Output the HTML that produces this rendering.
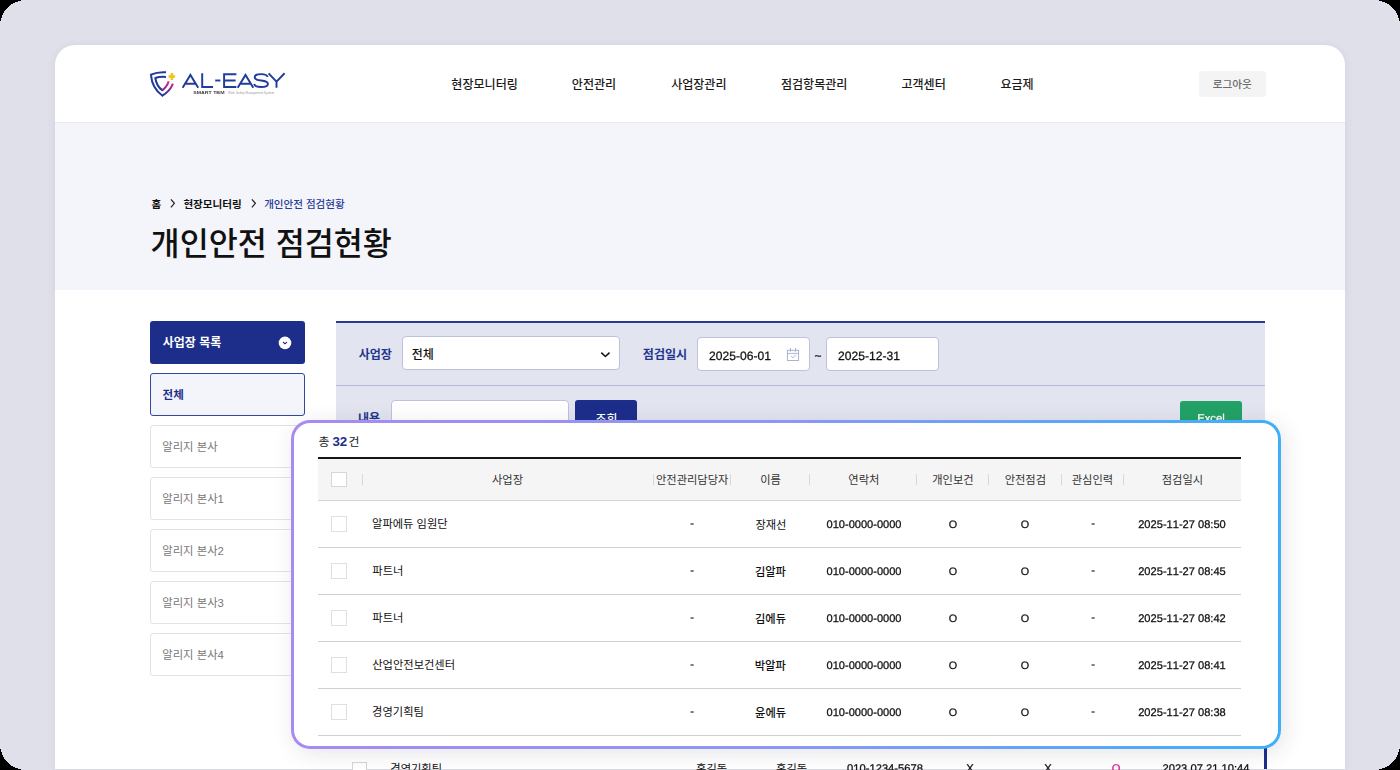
<!DOCTYPE html>
<html lang="ko"><head><meta charset="utf-8"><title>개인안전 점검현황</title>
<style>
html,body{margin:0;padding:0;background:#000}
body{width:1400px;height:770px;overflow:hidden;font-family:"Liberation Sans",sans-serif}
#stage{position:absolute;left:0;top:0;width:1400px;height:770px;overflow:hidden;background:#dfe0e9}
#card{position:absolute;left:55px;top:45px;width:1290px;height:724px;background:#fff;border-radius:20px 20px 0 0;box-shadow:0 1px 9px rgba(60,65,110,.08)}
.b{position:absolute;display:block}
.k{position:absolute;display:block;overflow:visible}
.k svg{position:absolute;left:0;top:0;display:block;overflow:visible}
.k svg text{font-family:"Liberation Sans","Noto Sans CJK KR",sans-serif;white-space:pre}
.l{position:absolute;display:block;white-space:nowrap;height:17px;line-height:17px;will-change:transform;-webkit-text-stroke:.28px currentColor;text-rendering:geometricPrecision;font-kerning:none}
#ov{position:absolute;left:291px;top:420px;width:990px;height:328.5px;border-radius:19px;background:linear-gradient(90deg,#a98bf0 0%,#8b97f4 50%,#3eb0f8 100%);box-shadow:3px 4px 22px rgba(45,45,85,.12)}
#ovi{position:absolute;left:3px;top:3px;right:3px;bottom:3px;border-radius:16px;background:#fff}
</style></head>
<body>
<div id="stage">
<div id="card">
</div>
<div class="b" style="left:55px;top:123px;width:1290px;height:167px;background:#f4f5fa"></div>
<div class="b" style="left:55px;top:122px;width:1290px;height:1px;background:#ebebee"></div>
<svg class="b" style="left:148px;top:68px;will-change:transform" width="140" height="32" viewBox="148 68 140 32" fill="none" role="img" aria-label="AL-EASY SMART TBM Work Safety Management System">
<defs><linearGradient id="lg" gradientUnits="userSpaceOnUse" x1="0" y1="81" x2="0" y2="95"><stop offset="0" stop-color="#ea1f86"/><stop offset="0.55" stop-color="#8a2d9c"/><stop offset="1" stop-color="#2a3a9c"/></linearGradient></defs>
<path d="M166 72.3 C160 71.9 155 72.9 150.9 74.7 C151.7 84 155.5 91 162.5 95.8" stroke="#1f3a99" stroke-width="2" stroke-linejoin="round"/>
<path d="M161.8 96 C167.6 92.8 171 88.8 172.9 83.7" stroke="url(#lg)" stroke-width="2"/>
<path d="M166 76.9 C161.5 76.5 158 77 155.3 78 C156.1 83.6 158.5 87.6 162.5 90.4" stroke="#1f3a99" stroke-width="2" stroke-linejoin="round"/>
<path d="M161.8 90.6 C165.4 88.2 167.4 85.1 168.7 81.4" stroke="url(#lg)" stroke-width="2"/>
<path d="M171.9 73 V80 M168.5 76.6 H175.1" stroke="#f0c41b" stroke-width="2.5"/>
<g stroke="#203d9c" stroke-width="1.95" stroke-linejoin="miter" stroke-linecap="butt">
<path d="M182.6 87.8 L190.4 74.9 L198.2 87.8 M185.4 83.7 H195.4"/>
<path d="M202.2 73.3 V86.9 H213"/>
<path d="M215.2 80.5 H220.4"/>
<path d="M236.4 74.2 H224.1 V86.9 H236.4 M224.1 80.5 H235.6"/>
<path d="M237.7 87.8 L245.5 74.9 L253.3 87.8 M240.5 83.7 H250.5"/>
<path d="M267.6 76.9 C267.2 74.7 264.6 74.1 261 74.1 C257.4 74.1 254.7 74.8 254.7 77.2 C254.7 79.8 257.6 80.1 261.2 80.5 C264.9 80.9 267.9 81.3 267.9 83.9 C267.9 86.4 264.9 86.9 261.2 86.9 C257.4 86.9 254.5 86.3 254.2 83.8"/>
<path d="M268.6 73.3 L276.5 81.6 L284.6 73.3 M276.5 81.4 V87.8"/>
</g>
<text x="193.2" y="94.1" font-family="Liberation Sans, sans-serif" font-size="3.5" font-weight="700" fill="#3c3c3c" textLength="31.3" lengthAdjust="spacingAndGlyphs">SMART TBM</text>
<text x="228" y="94.1" font-family="Liberation Sans, sans-serif" font-size="3.3" fill="#9c9c9c" textLength="46.3" lengthAdjust="spacingAndGlyphs">Work Safety Management System</text>
</svg>
<span class="k" style="left:450px;top:76px;width:68px;height:18px"><svg width="68" height="18" viewBox="0 0 68 18" fill="#1a1a1a"><text x="1.32" y="13.1" font-size="12.05" font-weight="500">현장모니터링</text></svg></span>
<span class="k" style="left:571px;top:76px;width:45px;height:18px"><svg width="45" height="18" viewBox="0 0 45 18" fill="#1a1a1a"><text x="0.8" y="13.1" font-size="12.05" font-weight="500">안전관리</text></svg></span>
<span class="k" style="left:670px;top:76px;width:57px;height:18px"><svg width="57" height="18" viewBox="0 0 57 18" fill="#1a1a1a"><text x="1.13" y="13.1" font-size="12.05" font-weight="500">사업장관리</text></svg></span>
<span class="k" style="left:780px;top:76px;width:68px;height:18px"><svg width="68" height="18" viewBox="0 0 68 18" fill="#1a1a1a"><text x="0.96" y="13.1" font-size="12.05" font-weight="500">점검항목관리</text></svg></span>
<span class="k" style="left:901px;top:76px;width:45px;height:18px"><svg width="45" height="18" viewBox="0 0 45 18" fill="#1a1a1a"><text x="0.45" y="13.1" font-size="12.05" font-weight="500">고객센터</text></svg></span>
<span class="k" style="left:1000px;top:76px;width:34px;height:18px"><svg width="34" height="18" viewBox="0 0 34 18" fill="#1a1a1a"><text x="0.45" y="13.1" font-size="12.05" font-weight="500">요금제</text></svg></span>
<div class="b" style="left:1199px;top:70.5px;width:66.5px;height:26.5px;background:#f4f4f5;border-radius:3px"></div>
<span class="k" style="left:1212px;top:76px;width:41px;height:16px"><svg width="41" height="16" viewBox="0 0 41 16" fill="#6a6a6a"><text x="0.8" y="11.6" font-size="10.6" font-weight="500">로그아웃</text></svg></span>
<span class="k" style="left:151px;top:196px;width:11px;height:17px"><svg width="11" height="17" viewBox="0 0 11 17" fill="#111"><text x="0.55" y="11.9" font-size="10.55" font-weight="600">홈</text></svg></span>
<span class="k" style="left:182px;top:196px;width:60px;height:17px"><svg width="60" height="17" viewBox="0 0 60 17" fill="#111"><text x="1.41" y="11.9" font-size="10.55" font-weight="600">현장모니터링</text></svg></span>
<span class="k" style="left:263px;top:196px;width:82px;height:17px"><svg width="82" height="17" viewBox="0 0 82 17" fill="#2a3c98"><text x="1.17" y="11.9" font-size="10.55" font-weight="500">개인안전 점검현황</text></svg></span>
<svg class="b" style="left:168.3px;top:198px" width="8" height="11" viewBox="0 0 8 11" fill="none"><path d="M2.9 1.3 L6.4 5.3 L2.9 9.3" stroke="#1a1a1a" stroke-width="1.15"/></svg>
<svg class="b" style="left:249px;top:198px" width="8" height="11" viewBox="0 0 8 11" fill="none"><path d="M2.9 1.3 L6.4 5.3 L2.9 9.3" stroke="#1a1a1a" stroke-width="1.15"/></svg>
<span class="k" style="left:150px;top:223px;width:241px;height:43px"><svg width="241" height="43" viewBox="0 0 241 43" fill="#111"><text x="0.6" y="31.6" font-size="31.6" font-weight="500">개인안전 점검현황</text></svg></span>
<div class="b" style="left:150px;top:321px;width:155px;height:42.5px;background:#1c2e8a;border-radius:3px"></div>
<span class="k" style="left:162px;top:334px;width:60px;height:18px"><svg width="60" height="18" viewBox="0 0 60 18" fill="#fff"><text x="0.74" y="12.6" font-size="12" font-weight="700">사업장 목록</text></svg></span>
<svg class="b" style="left:277px;top:335px" width="16" height="16" viewBox="277 335 16 16"><circle cx="285" cy="342.9" r="6.3" fill="#fff"/><path d="M283 342 L285 343.8 L287 342" stroke="#1c2e8a" stroke-width="1.1" fill="none"/></svg>
<div class="b" style="left:150px;top:373px;width:155px;height:42.5px;background:#f4f5fb;border:1px solid #3247a0;border-radius:3px;box-sizing:border-box"></div>
<span class="k" style="left:162px;top:387px;width:22px;height:17px"><svg width="22" height="17" viewBox="0 0 22 17" fill="#1c2e8a"><text x="0.59" y="12.4" font-size="11.5" font-weight="700">전체</text></svg></span>
<div class="b" style="left:150px;top:425px;width:155px;height:42.5px;background:#fff;border:1px solid #e3e3e6;border-radius:3px;box-sizing:border-box"></div>
<span class="k" style="left:162px;top:439px;width:56px;height:17px"><svg width="56" height="17" viewBox="0 0 56 17" fill="#777"><text x="0.25" y="12.4" font-size="11.35" font-weight="400">알리지 본사</text></svg></span>
<div class="b" style="left:150px;top:477px;width:155px;height:42.5px;background:#fff;border:1px solid #e3e3e6;border-radius:3px;box-sizing:border-box"></div>
<span class="k" style="left:162px;top:491px;width:62px;height:17px"><svg width="62" height="17" viewBox="0 0 62 17" fill="#777"><text x="0.25" y="12.4" font-size="11.35" font-weight="400">알리지 본사1</text></svg></span>
<div class="b" style="left:150px;top:529px;width:155px;height:42.5px;background:#fff;border:1px solid #e3e3e6;border-radius:3px;box-sizing:border-box"></div>
<span class="k" style="left:162px;top:543px;width:62px;height:17px"><svg width="62" height="17" viewBox="0 0 62 17" fill="#777"><text x="0.25" y="12.4" font-size="11.35" font-weight="400">알리지 본사2</text></svg></span>
<div class="b" style="left:150px;top:581px;width:155px;height:42.5px;background:#fff;border:1px solid #e3e3e6;border-radius:3px;box-sizing:border-box"></div>
<span class="k" style="left:162px;top:595px;width:62px;height:17px"><svg width="62" height="17" viewBox="0 0 62 17" fill="#777"><text x="0.25" y="12.4" font-size="11.35" font-weight="400">알리지 본사3</text></svg></span>
<div class="b" style="left:150px;top:633px;width:155px;height:42.5px;background:#fff;border:1px solid #e3e3e6;border-radius:3px;box-sizing:border-box"></div>
<span class="k" style="left:162px;top:647px;width:62px;height:17px"><svg width="62" height="17" viewBox="0 0 62 17" fill="#777"><text x="0.25" y="12.4" font-size="11.35" font-weight="400">알리지 본사4</text></svg></span>
<div class="b" style="left:336px;top:321px;width:929px;height:130px;background:#e2e4ef"></div>
<div class="b" style="left:336px;top:321px;width:929px;height:2px;background:#2b3b94"></div>
<div class="b" style="left:336px;top:385px;width:929px;height:1px;background:#b4b9d8"></div>
<span class="k" style="left:357px;top:346px;width:36px;height:18px"><svg width="36" height="18" viewBox="0 0 36 18" fill="#24358e"><text x="1.63" y="13.2" font-size="12.05" font-weight="700">사업장</text></svg></span>
<div class="b" style="left:402px;top:336px;width:218px;height:34px;background:#fff;border:1px solid #bcc1de;border-radius:4px;box-sizing:border-box"></div>
<span class="k" style="left:411px;top:346px;width:23px;height:18px"><svg width="23" height="18" viewBox="0 0 23 18" fill="#111"><text x="0.66" y="12.9" font-size="12" font-weight="500">전체</text></svg></span>
<svg class="b" style="left:598px;top:348px" width="16" height="13" viewBox="598 348 16 13" fill="none"><path d="M601.3 352.6 L605.4 356.5 L609.5 352.6" stroke="#111" stroke-width="1.5" stroke-linejoin="round"/></svg>
<span class="k" style="left:642px;top:346px;width:45px;height:18px"><svg width="45" height="18" viewBox="0 0 45 18" fill="#24358e"><text x="0.87" y="13.2" font-size="12.05" font-weight="700">점검일시</text></svg></span>
<div class="b" style="left:697px;top:337px;width:113px;height:34px;background:#fff;border:1px solid #bcc1de;border-radius:4px;box-sizing:border-box"></div>
<span class="l" style="left:709.1px;top:348px;font-size:12.1px;color:#111;">2025-06-01</span>
<svg class="b" style="left:785px;top:346px" width="16" height="17" viewBox="785 346 16 17" fill="none" stroke="#a3a9d1" stroke-width="0.9"><rect x="787.4" y="350.3" width="11.2" height="10.2"/><path d="M790.5 348 V351.8 M795.6 348 V351.8 M787.4 353.4 H798.6 M791.2 356.2 L792.9 357.7 L795.9 355"/></svg>
<span class="l" style="left:818.3px;top:348px;font-size:12px;color:#111;transform:translateX(-50%);">~</span>
<div class="b" style="left:826px;top:337px;width:113px;height:34px;background:#fff;border:1px solid #bcc1de;border-radius:4px;box-sizing:border-box"></div>
<span class="l" style="left:837.6px;top:348px;font-size:12.1px;color:#111;">2025-12-31</span>
<span class="k" style="left:357px;top:410px;width:24px;height:18px"><svg width="24" height="18" viewBox="0 0 24 18" fill="#24358e"><text x="0.97" y="13" font-size="12.05" font-weight="700">내용</text></svg></span>
<div class="b" style="left:391px;top:400px;width:177.5px;height:34px;background:#fff;border:1px solid #bcc1de;border-radius:4px;box-sizing:border-box"></div>
<div class="b" style="left:575px;top:400px;width:62px;height:34px;background:#1c2e8a;border-radius:3px"></div>
<span class="k" style="left:595px;top:410px;width:22px;height:18px"><svg width="22" height="18" viewBox="0 0 22 18" fill="#fff"><text x="0.5" y="13" font-size="11.9" font-weight="500">조회</text></svg></span>
<div class="b" style="left:1180px;top:401px;width:62px;height:33px;background:#22a266;border-radius:3px"></div>
<span class="l" style="left:1210.9px;top:411px;font-size:11.3px;color:#fff;transform:translateX(-50%);">Excel</span>
<div class="b" style="left:1264px;top:748px;width:3px;height:21px;background:#1c2e8a"></div>
<div class="b" style="left:352px;top:762px;width:15px;height:15px;background:#fff;border:1px solid #d5d5d5;box-sizing:border-box"></div>
<span class="k" style="left:390px;top:761px;width:52px;height:17px"><svg width="52" height="17" viewBox="0 0 52 17" fill="#111"><text x="0.3" y="11.9" font-size="11.25" font-weight="400">경영기획팀</text></svg></span>
<span class="k" style="left:695px;top:761px;width:33px;height:17px"><svg width="33" height="17" viewBox="0 0 33 17" fill="#111"><text x="1.04" y="11.9" font-size="11.25" font-weight="400">홍길동</text></svg></span>
<span class="k" style="left:775px;top:761px;width:33px;height:17px"><svg width="33" height="17" viewBox="0 0 33 17" fill="#111"><text x="1.04" y="11.9" font-size="11.25" font-weight="400">홍길동</text></svg></span>
<span class="l" style="left:885px;top:761px;font-size:11.2px;color:#111;transform:translateX(-50%);">010-1234-5678</span>
<span class="l" style="left:970px;top:761px;font-size:11.2px;color:#111;transform:translateX(-50%);">X</span>
<span class="l" style="left:1048px;top:761px;font-size:11.2px;color:#111;transform:translateX(-50%);">X</span>
<span class="l" style="left:1116px;top:761px;font-size:11.2px;color:#e0218a;transform:translateX(-50%);">O</span>
<span class="l" style="left:1205.5px;top:761px;font-size:11.2px;color:#111;transform:translateX(-50%);">2023.07.21 10:44</span>
<div id="ov"><div id="ovi"></div></div>
<span class="k" style="left:318px;top:432px;width:42px;height:19px"><svg width="42" height="19" viewBox="0 0 42 19"><text x="0.5" y="13.7" font-size="11.9" font-weight="400" fill="#222">총</text><text x="14.42" y="13.7" font-size="13.3" font-weight="700" fill="#1c2e8a">32</text><text x="30.41" y="13.7" font-size="11.9" font-weight="400" fill="#222">건</text></svg></span>
<div class="b" style="left:318px;top:457px;width:923px;height:2px;background:#151515"></div>
<div class="b" style="left:318px;top:459px;width:923px;height:41px;background:#f5f5f5"></div>
<div class="b" style="left:318px;top:500px;width:923px;height:1px;background:#d4d4d4"></div>
<div class="b" style="left:331px;top:472.4px;width:15.5px;height:15px;background:#fff;border:1px solid #d6d6d6;box-sizing:border-box"></div>
<span class="k" style="left:491px;top:472px;width:33px;height:17px"><svg width="33" height="17" viewBox="0 0 33 17" fill="#333"><text x="0.96" y="12.3" font-size="11.25" font-weight="400">사업장</text></svg></span>
<span class="k" style="left:655px;top:472px;width:75px;height:17px"><svg width="75" height="17" viewBox="0 0 75 17" fill="#333"><text x="0.96" y="12.3" font-size="11.25" font-weight="400">안전관리담당자</text></svg></span>
<span class="k" style="left:760px;top:472px;width:22px;height:17px"><svg width="22" height="17" viewBox="0 0 22 17" fill="#333"><text x="0.17" y="12.3" font-size="11.25" font-weight="400">이름</text></svg></span>
<span class="k" style="left:848px;top:472px;width:31px;height:17px"><svg width="31" height="17" viewBox="0 0 31 17" fill="#333"><text x="0.32" y="12.3" font-size="11.25" font-weight="400">연락처</text></svg></span>
<span class="k" style="left:931px;top:472px;width:43px;height:17px"><svg width="43" height="17" viewBox="0 0 43 17" fill="#333"><text x="1.2" y="12.3" font-size="11.25" font-weight="400">개인보건</text></svg></span>
<span class="k" style="left:1004px;top:472px;width:42px;height:17px"><svg width="42" height="17" viewBox="0 0 42 17" fill="#333"><text x="0.64" y="12.3" font-size="11.25" font-weight="400">안전점검</text></svg></span>
<span class="k" style="left:1071px;top:472px;width:42px;height:17px"><svg width="42" height="17" viewBox="0 0 42 17" fill="#333"><text x="0.76" y="12.3" font-size="11.25" font-weight="400">관심인력</text></svg></span>
<span class="k" style="left:1161px;top:472px;width:42px;height:17px"><svg width="42" height="17" viewBox="0 0 42 17" fill="#333"><text x="0.73" y="12.3" font-size="11.25" font-weight="400">점검일시</text></svg></span>
<div class="b" style="left:362px;top:474.4px;width:1px;height:10.8px;background:#d8d8d8"></div>
<div class="b" style="left:652.5px;top:474.4px;width:1px;height:10.8px;background:#d8d8d8"></div>
<div class="b" style="left:730px;top:474.4px;width:1px;height:10.8px;background:#d8d8d8"></div>
<div class="b" style="left:809px;top:474.4px;width:1px;height:10.8px;background:#d8d8d8"></div>
<div class="b" style="left:915.8px;top:474.4px;width:1px;height:10.8px;background:#d8d8d8"></div>
<div class="b" style="left:988.3px;top:474.4px;width:1px;height:10.8px;background:#d8d8d8"></div>
<div class="b" style="left:1060.8px;top:474.4px;width:1px;height:10.8px;background:#d8d8d8"></div>
<div class="b" style="left:1122.8px;top:474.4px;width:1px;height:10.8px;background:#d8d8d8"></div>
<div class="b" style="left:331px;top:516.3px;width:15.5px;height:15.5px;background:#fff;border:1px solid #dfdfdf;box-sizing:border-box"></div>
<span class="k" style="left:371px;top:516px;width:77px;height:17px"><svg width="77" height="17" viewBox="0 0 77 17" fill="#111"><text x="1.06" y="12.1" font-size="11.25" font-weight="400">알파에듀 임원단</text></svg></span>
<span class="l" style="left:692px;top:516px;font-size:11.2px;color:#222;transform:translateX(-50%);">-</span>
<span class="k" style="left:754px;top:516px;width:33px;height:17px"><svg width="33" height="17" viewBox="0 0 33 17" fill="#111"><text x="1.41" y="12.5" font-size="11.25" font-weight="400">장재선</text></svg></span>
<span class="l" style="left:863.5px;top:517px;font-size:11.05px;color:#111;transform:translateX(-50%);">010-0000-0000</span>
<span class="l" style="left:953.3px;top:517px;font-size:10.8px;color:#111;transform:translateX(-50%);">O</span>
<span class="l" style="left:1025.3px;top:517px;font-size:10.8px;color:#111;transform:translateX(-50%);">O</span>
<span class="l" style="left:1092.5px;top:516px;font-size:11.2px;color:#222;transform:translateX(-50%);">-</span>
<span class="l" style="left:1182px;top:517px;font-size:11.1px;color:#111;transform:translateX(-50%);">2025-11-27 08:50</span>
<div class="b" style="left:318px;top:547px;width:923px;height:1px;background:#d0d0d0"></div>
<div class="b" style="left:331px;top:563.3px;width:15.5px;height:15.5px;background:#fff;border:1px solid #dfdfdf;box-sizing:border-box"></div>
<span class="k" style="left:371px;top:563px;width:33px;height:17px"><svg width="33" height="17" viewBox="0 0 33 17" fill="#111"><text x="1.36" y="12.1" font-size="11.25" font-weight="400">파트너</text></svg></span>
<span class="l" style="left:692px;top:563px;font-size:11.2px;color:#222;transform:translateX(-50%);">-</span>
<span class="k" style="left:754px;top:564px;width:33px;height:17px"><svg width="33" height="17" viewBox="0 0 33 17" fill="#111"><text x="0.91" y="12" font-size="11.25" font-weight="500">김알파</text></svg></span>
<span class="l" style="left:863.5px;top:564px;font-size:11.05px;color:#111;transform:translateX(-50%);">010-0000-0000</span>
<span class="l" style="left:953.3px;top:564px;font-size:10.8px;color:#111;transform:translateX(-50%);">O</span>
<span class="l" style="left:1025.3px;top:564px;font-size:10.8px;color:#111;transform:translateX(-50%);">O</span>
<span class="l" style="left:1092.5px;top:563px;font-size:11.2px;color:#222;transform:translateX(-50%);">-</span>
<span class="l" style="left:1182px;top:564px;font-size:11.1px;color:#111;transform:translateX(-50%);">2025-11-27 08:45</span>
<div class="b" style="left:318px;top:594px;width:923px;height:1px;background:#d0d0d0"></div>
<div class="b" style="left:331px;top:610.3px;width:15.5px;height:15.5px;background:#fff;border:1px solid #dfdfdf;box-sizing:border-box"></div>
<span class="k" style="left:371px;top:610px;width:33px;height:17px"><svg width="33" height="17" viewBox="0 0 33 17" fill="#111"><text x="1.36" y="12.1" font-size="11.25" font-weight="400">파트너</text></svg></span>
<span class="l" style="left:692px;top:610px;font-size:11.2px;color:#222;transform:translateX(-50%);">-</span>
<span class="k" style="left:754px;top:611px;width:33px;height:17px"><svg width="33" height="17" viewBox="0 0 33 17" fill="#111"><text x="1.03" y="12" font-size="11.25" font-weight="500">김에듀</text></svg></span>
<span class="l" style="left:863.5px;top:611px;font-size:11.05px;color:#111;transform:translateX(-50%);">010-0000-0000</span>
<span class="l" style="left:953.3px;top:611px;font-size:10.8px;color:#111;transform:translateX(-50%);">O</span>
<span class="l" style="left:1025.3px;top:611px;font-size:10.8px;color:#111;transform:translateX(-50%);">O</span>
<span class="l" style="left:1092.5px;top:610px;font-size:11.2px;color:#222;transform:translateX(-50%);">-</span>
<span class="l" style="left:1182px;top:611px;font-size:11.1px;color:#111;transform:translateX(-50%);">2025-11-27 08:42</span>
<div class="b" style="left:318px;top:641px;width:923px;height:1px;background:#d0d0d0"></div>
<div class="b" style="left:331px;top:657.3px;width:15.5px;height:15.5px;background:#fff;border:1px solid #dfdfdf;box-sizing:border-box"></div>
<span class="k" style="left:371px;top:657px;width:84px;height:17px"><svg width="84" height="17" viewBox="0 0 84 17" fill="#111"><text x="1.28" y="12.1" font-size="11.25" font-weight="400">산업안전보건센터</text></svg></span>
<span class="l" style="left:692px;top:657px;font-size:11.2px;color:#222;transform:translateX(-50%);">-</span>
<span class="k" style="left:754px;top:658px;width:33px;height:17px"><svg width="33" height="17" viewBox="0 0 33 17" fill="#111"><text x="0.77" y="12" font-size="11.25" font-weight="500">박알파</text></svg></span>
<span class="l" style="left:863.5px;top:658px;font-size:11.05px;color:#111;transform:translateX(-50%);">010-0000-0000</span>
<span class="l" style="left:953.3px;top:658px;font-size:10.8px;color:#111;transform:translateX(-50%);">O</span>
<span class="l" style="left:1025.3px;top:658px;font-size:10.8px;color:#111;transform:translateX(-50%);">O</span>
<span class="l" style="left:1092.5px;top:657px;font-size:11.2px;color:#222;transform:translateX(-50%);">-</span>
<span class="l" style="left:1182px;top:658px;font-size:11.1px;color:#111;transform:translateX(-50%);">2025-11-27 08:41</span>
<div class="b" style="left:318px;top:688px;width:923px;height:1px;background:#d0d0d0"></div>
<div class="b" style="left:331px;top:704.3px;width:15.5px;height:15.5px;background:#fff;border:1px solid #dfdfdf;box-sizing:border-box"></div>
<span class="k" style="left:371px;top:704px;width:53px;height:17px"><svg width="53" height="17" viewBox="0 0 53 17" fill="#111"><text x="1.1" y="12.1" font-size="11.25" font-weight="400">경영기획팀</text></svg></span>
<span class="l" style="left:692px;top:704px;font-size:11.2px;color:#222;transform:translateX(-50%);">-</span>
<span class="k" style="left:754px;top:705px;width:33px;height:17px"><svg width="33" height="17" viewBox="0 0 33 17" fill="#111"><text x="1.07" y="12" font-size="11.25" font-weight="500">윤에듀</text></svg></span>
<span class="l" style="left:863.5px;top:705px;font-size:11.05px;color:#111;transform:translateX(-50%);">010-0000-0000</span>
<span class="l" style="left:953.3px;top:705px;font-size:10.8px;color:#111;transform:translateX(-50%);">O</span>
<span class="l" style="left:1025.3px;top:705px;font-size:10.8px;color:#111;transform:translateX(-50%);">O</span>
<span class="l" style="left:1092.5px;top:704px;font-size:11.2px;color:#222;transform:translateX(-50%);">-</span>
<span class="l" style="left:1182px;top:705px;font-size:11.1px;color:#111;transform:translateX(-50%);">2025-11-27 08:38</span>
<div class="b" style="left:318px;top:735px;width:923px;height:1px;background:#d0d0d0"></div>
<svg class="b" style="left:0;top:0;pointer-events:none" width="1400" height="770" viewBox="0 0 1400 770" shape-rendering="crispEdges" aria-hidden="true" fill="#000"><path transform="translate(0 0) rotate(0)" d="M0 0 H26 A26 26 0 0 0 0 26 Z"/><path transform="translate(1400 0) rotate(90)" d="M0 0 H26 A26 26 0 0 0 0 26 Z"/><path transform="translate(1400 770) rotate(180)" d="M0 0 H26 A26 26 0 0 0 0 26 Z"/><path transform="translate(0 770) rotate(270)" d="M0 0 H26 A26 26 0 0 0 0 26 Z"/></svg>
</div>
</body></html>
